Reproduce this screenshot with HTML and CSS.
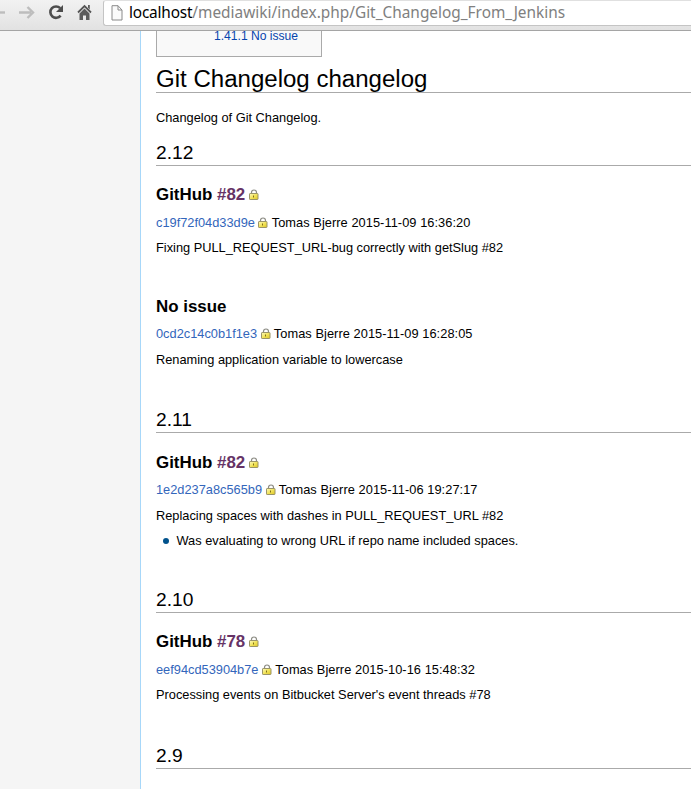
FILE: index.html
```
<!DOCTYPE html>
<html lang="en">
<head>
<meta charset="utf-8">
<title>Git Changelog From Jenkins</title>
<link rel="stylesheet" href="styles.css">
</head>
<body>
<svg class="defs" width="0" height="0">
  <defs>
    <linearGradient id="gold" x1="0" y1="0" x2="1" y2="1"><stop offset="0" stop-color="#fbf8c0"/><stop offset=".5" stop-color="#f2e45c"/><stop offset="1" stop-color="#dcc424"/></linearGradient>
    <symbol id="lock" viewBox="0 0 10 11">
      <path d="M2.500 5.500V3.500Q2.500 1 5 1T7.500 3.500V5.500" fill="none" stroke="#8c8c84" stroke-width="1.2"/>
      <rect x=".5" y="4.500" width="8.500" height="6" rx=".6" fill="url(#gold)" stroke="#9a9468"/>
      <path d="M4.500 6.500v2" stroke="#807018" stroke-width="1"/>
    </symbol>
  </defs>
</svg>
<header class="toolbar">
  <svg class="nav" width="104" height="30" viewBox="0 0 104 30">
    <path d="M0 12.5h5" stroke="#bdbdbd" stroke-width="2.4"/>
    <path d="M19 12.5h12M27.5 7l5.500 5.500-5.500 5.500" fill="none" stroke="#bdbdbd" stroke-width="2.4"/>
    <path d="M60.2 8.2A5.7 5.7 0 1 0 60.6 15.6" fill="none" stroke="#4d4d4d" stroke-width="2.6"/>
    <path d="M63 5v7h-7z" fill="#4d4d4d"/>
    <path d="M78 12.500l6.500-6.500 6.500 6.500" fill="none" stroke="#555" stroke-width="1.800"/>
    <path d="M79.500 13.500l5-5 5 5V20H86v-4.500h-3V20h-3.500zM88 5h1.800v4.500l-1.800-1.800z" fill="#5c5c5c"/>
  </svg>
  <div class="address">
    <svg class="page-icon" width="12" height="16" viewBox="0 0 12 16"><path d="M1 .7h6l4 4.300v10H1z" fill="#fafafa" stroke="#8a8a8a"/><path d="M7 .7V5h4" fill="none" stroke="#8a8a8a"/></svg>
    <span class="url"><b>localhost</b>/mediawiki/index.php/Git_Changelog_From_Jenkins</span>
  </div>
</header>
<main class="content">
  <div class="toc"><a>1.41.1 No issue</a></div>
  <h1>Git Changelog changelog</h1>
  <p>Changelog of Git Changelog.</p>

  <h2>2.12</h2>
  <h3>GitHub <a class="visited">#82<svg class="lock"><use href="#lock"/></svg></a></h3>
  <p><a>c19f72f04d33d9e<svg class="lock"><use href="#lock"/></svg></a> <span class="meta">Tomas Bjerre 2015-11-09 16:36:20</span></p>
  <p>Fixing PULL_REQUEST_URL-bug correctly with getSlug #82</p>
  <p class="blank"></p>
  <h3>No issue</h3>
  <p><a>0cd2c14c0b1f1e3<svg class="lock"><use href="#lock"/></svg></a> <span class="meta">Tomas Bjerre 2015-11-09 16:28:05</span></p>
  <p>Renaming application variable to lowercase</p>
  <p class="blank"></p>

  <h2>2.11</h2>
  <h3>GitHub <a class="visited">#82<svg class="lock"><use href="#lock"/></svg></a></h3>
  <p><a>1e2d237a8c565b9<svg class="lock"><use href="#lock"/></svg></a> <span class="meta">Tomas Bjerre 2015-11-06 19:27:17</span></p>
  <p>Replacing spaces with dashes in PULL_REQUEST_URL #82</p>
  <ul><li>Was evaluating to wrong URL if repo name included spaces.</li></ul>
  <p class="blank"></p>

  <h2>2.10</h2>
  <h3>GitHub <a class="visited">#78<svg class="lock"><use href="#lock"/></svg></a></h3>
  <p><a>eef94cd53904b7e<svg class="lock"><use href="#lock"/></svg></a> <span class="meta">Tomas Bjerre 2015-10-16 15:48:32</span></p>
  <p>Processing events on Bitbucket Server's event threads #78</p>
  <p class="blank"></p>

  <h2>2.9</h2>
</main>
</body>
</html>
```
FILE: styles.css
```
* { box-sizing: border-box; }
html, body { height: 100%; }
body {
  margin: 0;
  overflow: hidden;
  display: flex;
  flex-direction: column;
  background: #f5f5f5;
  font-family: "Liberation Sans", Arial, sans-serif;
}
.defs { position: absolute; }
.toolbar {
  flex: none;
  height: 31px;
  display: flex;
  align-items: flex-start;
  background: linear-gradient(#f2f2f2, #e2e2e2);
  border-bottom: 1px solid #a5a5a5;
}
.nav { flex: none; margin-right: -1px; }
.address {
  flex: 1;
  height: 26px;
  display: flex;
  align-items: center;
  padding-left: 7px;
  background: #fff;
  border: 1px solid #c4c4c4;
  border-top-color: #e0e0e0;
  border-right: 0;
  border-radius: 3px 0 0 3px;
}
.page-icon { flex: none; margin-right: 6px; }
.url {
  font: 16px/22px "Noto Sans", "Open Sans", sans-serif;
  color: #808080;
  white-space: nowrap;
  transform: translateY(-1px) scaleX(.962);
  transform-origin: left;
}
.url b { font-weight: normal; color: #000; letter-spacing: -.2px; }
.content {
  flex: 1;
  min-height: 0;
  overflow: hidden;
  margin-left: 140px;
  padding-left: 15px;
  border-left: 1px solid #a7d7f9;
  background: #fff;
  font-size: 12.8px;
  line-height: 19.2px;
  color: #000;
}
.toc {
  width: 166px;
  height: 26px;
  padding: 0 0 0 57px;
  border: 1px solid #aaa;
  border-top: 0;
  background: #f9f9f9;
  font-size: 12.1px;
  line-height: 11px;
}
.toc a { color: #0645ad; }
h1, h2, h3 { margin: 0; font-weight: normal; padding: .5em 0 .17em; }
h1, h2 { border-bottom: 1px solid #aaa; margin-bottom: .6em; }
h1 { font-size: 24.05px; }
h2 { font-size: 19.2px; padding-top: 9.8px; padding-bottom: 2.7px; }
h3 {
  font-size: 16.9px;
  font-weight: bold;
  height: 30.2px;
  padding: 7.9px 0 0;
  margin-bottom: .3em;
}
p { margin: .4em 0 .5em; }
.blank { height: 18.7px; }
a { color: #36b; }
.visited { color: #636; }
.meta { letter-spacing: .06px; }
.lock { width: 10px; height: 11px; margin: 0 -.3px 0 3.500px; vertical-align: -1px; }
h3 .lock { vertical-align: 0; }
ul { margin: 0 0 0 1.6em; padding: 0; list-style: none; }
li { position: relative; margin-bottom: -.5px; }
li::before {
  content: "";
  position: absolute;
  left: -13px;
  top: 7px;
  width: 6px;
  height: 6px;
  border-radius: 50%;
  background: #00528c;
}
```
